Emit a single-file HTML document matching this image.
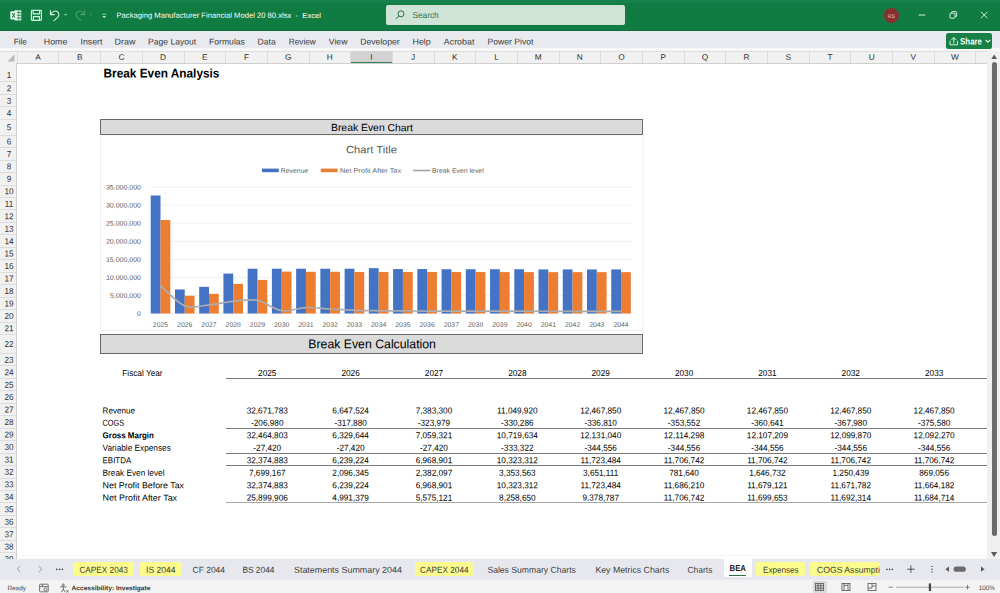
<!DOCTYPE html>
<html lang="en"><head><meta charset="utf-8"><title>Packaging Manufacturer Financial Model 20 80.xlsx - Excel</title>
<style>
html,body{margin:0;padding:0;}
body{width:1000px;height:593px;overflow:hidden;position:relative;background:#fff;font-family:"Liberation Sans",sans-serif;}
.r{position:absolute;display:block;}
.t{position:absolute;left:0;top:0;white-space:pre;transform-origin:0 0;display:block;}
</style></head><body>
<div class="r" style="left:0.00px;top:0.00px;width:1000.00px;height:31.00px;background:#107c41;"></div>
<div class="r" style="left:0.00px;top:0.00px;width:1000.00px;height:2.60px;background:#16814a;"></div>
<div class="r" style="left:0.00px;top:29.80px;width:1000.00px;height:1.20px;background:#0f6e3a;"></div>
<div class="r" style="left:385.80px;top:5.40px;width:239.20px;height:20.00px;background:#cfe3d7;border-radius:2px;"></div>
<div class="r" style="left:0.00px;top:31.00px;width:1000.00px;height:20.00px;background:#e8eaef;"></div>
<div class="r" style="left:0.00px;top:51.00px;width:1000.00px;height:508.40px;background:#fff;"></div>
<div class="r" style="left:0.00px;top:47.80px;width:1000.00px;height:3.00px;background:#f7f7f7;"></div>
<div class="r" style="left:0.00px;top:50.60px;width:987.50px;height:12.80px;background:#f1f1f1;"></div>
<div class="r" style="left:0.00px;top:50.60px;width:987.50px;height:1.30px;background:#dfdfdf;"></div>
<div class="r" style="left:0.00px;top:62.60px;width:987.50px;height:0.80px;background:#cfcfcf;"></div>
<div class="r" style="left:350.64px;top:50.80px;width:41.68px;height:12.60px;background:#d2d2d2;"></div>
<div class="r" style="left:350.64px;top:61.60px;width:41.68px;height:1.80px;background:#2f7d53;"></div>
<span class="t" style="font-size:7.9px;line-height:9.48px;color:#2e2e2e;transform:translate(35.27px,52.76px) scaleX(1.0500) rotate(0.04deg);">A</span>
<span class="t" style="font-size:7.9px;line-height:9.48px;color:#2e2e2e;transform:translate(76.95px,52.76px) scaleX(1.0500) rotate(0.04deg);">B</span>
<span class="t" style="font-size:7.9px;line-height:9.48px;color:#2e2e2e;transform:translate(118.40px,52.76px) scaleX(1.0500) rotate(0.04deg);">C</span>
<span class="t" style="font-size:7.9px;line-height:9.48px;color:#2e2e2e;transform:translate(160.08px,52.76px) scaleX(1.0500) rotate(0.04deg);">D</span>
<span class="t" style="font-size:7.9px;line-height:9.48px;color:#2e2e2e;transform:translate(201.99px,52.76px) scaleX(1.0500) rotate(0.04deg);">E</span>
<span class="t" style="font-size:7.9px;line-height:9.48px;color:#2e2e2e;transform:translate(243.91px,52.76px) scaleX(1.0500) rotate(0.04deg);">F</span>
<span class="t" style="font-size:7.9px;line-height:9.48px;color:#2e2e2e;transform:translate(284.89px,52.76px) scaleX(1.0500) rotate(0.04deg);">G</span>
<span class="t" style="font-size:7.9px;line-height:9.48px;color:#2e2e2e;transform:translate(326.80px,52.76px) scaleX(1.0500) rotate(0.04deg);">H</span>
<span class="t" style="font-size:7.9px;line-height:9.48px;color:#2e2e2e;transform:translate(370.33px,52.76px) scaleX(1.0500) rotate(0.04deg);">I</span>
<span class="t" style="font-size:7.9px;line-height:9.48px;color:#2e2e2e;transform:translate(411.09px,52.76px) scaleX(1.0500) rotate(0.04deg);">J</span>
<span class="t" style="font-size:7.9px;line-height:9.48px;color:#2e2e2e;transform:translate(452.07px,52.76px) scaleX(1.0500) rotate(0.04deg);">K</span>
<span class="t" style="font-size:7.9px;line-height:9.48px;color:#2e2e2e;transform:translate(494.21px,52.76px) scaleX(1.0500) rotate(0.04deg);">L</span>
<span class="t" style="font-size:7.9px;line-height:9.48px;color:#2e2e2e;transform:translate(534.74px,52.76px) scaleX(1.0500) rotate(0.04deg);">M</span>
<span class="t" style="font-size:7.9px;line-height:9.48px;color:#2e2e2e;transform:translate(576.88px,52.76px) scaleX(1.0500) rotate(0.04deg);">N</span>
<span class="t" style="font-size:7.9px;line-height:9.48px;color:#2e2e2e;transform:translate(618.33px,52.76px) scaleX(1.0500) rotate(0.04deg);">O</span>
<span class="t" style="font-size:7.9px;line-height:9.48px;color:#2e2e2e;transform:translate(660.47px,52.76px) scaleX(1.0500) rotate(0.04deg);">P</span>
<span class="t" style="font-size:7.9px;line-height:9.48px;color:#2e2e2e;transform:translate(701.69px,52.76px) scaleX(1.0500) rotate(0.04deg);">Q</span>
<span class="t" style="font-size:7.9px;line-height:9.48px;color:#2e2e2e;transform:translate(743.60px,52.76px) scaleX(1.0500) rotate(0.04deg);">R</span>
<span class="t" style="font-size:7.9px;line-height:9.48px;color:#2e2e2e;transform:translate(785.51px,52.76px) scaleX(1.0500) rotate(0.04deg);">S</span>
<span class="t" style="font-size:7.9px;line-height:9.48px;color:#2e2e2e;transform:translate(827.43px,52.76px) scaleX(1.0500) rotate(0.04deg);">T</span>
<span class="t" style="font-size:7.9px;line-height:9.48px;color:#2e2e2e;transform:translate(868.64px,52.76px) scaleX(1.0500) rotate(0.04deg);">U</span>
<span class="t" style="font-size:7.9px;line-height:9.48px;color:#2e2e2e;transform:translate(910.55px,52.76px) scaleX(1.0500) rotate(0.04deg);">V</span>
<span class="t" style="font-size:7.9px;line-height:9.48px;color:#2e2e2e;transform:translate(951.09px,52.76px) scaleX(1.0500) rotate(0.04deg);">W</span>
<div class="r" style="left:16.80px;top:52.00px;width:0.80px;height:11.40px;background:#dcdcdc;"></div>
<div class="r" style="left:58.48px;top:52.00px;width:0.80px;height:11.40px;background:#dcdcdc;"></div>
<div class="r" style="left:100.16px;top:52.00px;width:0.80px;height:11.40px;background:#dcdcdc;"></div>
<div class="r" style="left:141.84px;top:52.00px;width:0.80px;height:11.40px;background:#dcdcdc;"></div>
<div class="r" style="left:183.52px;top:52.00px;width:0.80px;height:11.40px;background:#dcdcdc;"></div>
<div class="r" style="left:225.20px;top:52.00px;width:0.80px;height:11.40px;background:#dcdcdc;"></div>
<div class="r" style="left:266.88px;top:52.00px;width:0.80px;height:11.40px;background:#dcdcdc;"></div>
<div class="r" style="left:308.56px;top:52.00px;width:0.80px;height:11.40px;background:#dcdcdc;"></div>
<div class="r" style="left:350.24px;top:52.00px;width:0.80px;height:11.40px;background:#dcdcdc;"></div>
<div class="r" style="left:391.92px;top:52.00px;width:0.80px;height:11.40px;background:#dcdcdc;"></div>
<div class="r" style="left:433.60px;top:52.00px;width:0.80px;height:11.40px;background:#dcdcdc;"></div>
<div class="r" style="left:475.28px;top:52.00px;width:0.80px;height:11.40px;background:#dcdcdc;"></div>
<div class="r" style="left:516.96px;top:52.00px;width:0.80px;height:11.40px;background:#dcdcdc;"></div>
<div class="r" style="left:558.64px;top:52.00px;width:0.80px;height:11.40px;background:#dcdcdc;"></div>
<div class="r" style="left:600.32px;top:52.00px;width:0.80px;height:11.40px;background:#dcdcdc;"></div>
<div class="r" style="left:642.00px;top:52.00px;width:0.80px;height:11.40px;background:#dcdcdc;"></div>
<div class="r" style="left:683.68px;top:52.00px;width:0.80px;height:11.40px;background:#dcdcdc;"></div>
<div class="r" style="left:725.36px;top:52.00px;width:0.80px;height:11.40px;background:#dcdcdc;"></div>
<div class="r" style="left:767.04px;top:52.00px;width:0.80px;height:11.40px;background:#dcdcdc;"></div>
<div class="r" style="left:808.72px;top:52.00px;width:0.80px;height:11.40px;background:#dcdcdc;"></div>
<div class="r" style="left:850.40px;top:52.00px;width:0.80px;height:11.40px;background:#dcdcdc;"></div>
<div class="r" style="left:892.08px;top:52.00px;width:0.80px;height:11.40px;background:#dcdcdc;"></div>
<div class="r" style="left:933.76px;top:52.00px;width:0.80px;height:11.40px;background:#dcdcdc;"></div>
<div class="r" style="left:975.44px;top:52.00px;width:0.80px;height:11.40px;background:#dcdcdc;"></div>
<div class="r" style="left:1017.12px;top:52.00px;width:0.80px;height:11.40px;background:#dcdcdc;"></div>
<svg class="r" style="left:0;top:51.0px" width="17.2" height="12.399999999999999" viewBox="0 0 17.2 12.399999999999999"><polygon points="14.5,3.5 14.5,10.5 7.5,10.5" fill="#b8b8b8"/></svg>
<div class="r" style="left:0.00px;top:63.40px;width:17.20px;height:496.00px;background:#f1f1f1;"></div>
<div class="r" style="left:16.40px;top:63.40px;width:0.80px;height:496.00px;background:#cfcfcf;"></div>
<div class="r" style="left:0.00px;top:81.40px;width:17.20px;height:0.80px;background:#dcdcdc;"></div>
<span class="t" style="font-size:8.6px;line-height:10.32px;color:#333;transform:translate(6.83px,69.94px) scaleX(0.9500) rotate(0.04deg);">1</span>
<div class="r" style="left:0.00px;top:93.86px;width:17.20px;height:0.80px;background:#dcdcdc;"></div>
<span class="t" style="font-size:8.6px;line-height:10.32px;color:#333;transform:translate(6.83px,83.17px) scaleX(0.9500) rotate(0.04deg);">2</span>
<div class="r" style="left:0.00px;top:106.32px;width:17.20px;height:0.80px;background:#dcdcdc;"></div>
<span class="t" style="font-size:8.6px;line-height:10.32px;color:#333;transform:translate(6.83px,95.63px) scaleX(0.9500) rotate(0.04deg);">3</span>
<div class="r" style="left:0.00px;top:118.78px;width:17.20px;height:0.80px;background:#dcdcdc;"></div>
<span class="t" style="font-size:8.6px;line-height:10.32px;color:#333;transform:translate(6.83px,108.09px) scaleX(0.9500) rotate(0.04deg);">4</span>
<div class="r" style="left:0.00px;top:134.68px;width:17.20px;height:0.80px;background:#dcdcdc;"></div>
<span class="t" style="font-size:8.6px;line-height:10.32px;color:#333;transform:translate(6.83px,122.27px) scaleX(0.9500) rotate(0.04deg);">5</span>
<div class="r" style="left:0.00px;top:147.14px;width:17.20px;height:0.80px;background:#dcdcdc;"></div>
<span class="t" style="font-size:8.6px;line-height:10.32px;color:#333;transform:translate(6.83px,136.45px) scaleX(0.9500) rotate(0.04deg);">6</span>
<div class="r" style="left:0.00px;top:159.60px;width:17.20px;height:0.80px;background:#dcdcdc;"></div>
<span class="t" style="font-size:8.6px;line-height:10.32px;color:#333;transform:translate(6.83px,148.91px) scaleX(0.9500) rotate(0.04deg);">7</span>
<div class="r" style="left:0.00px;top:172.06px;width:17.20px;height:0.80px;background:#dcdcdc;"></div>
<span class="t" style="font-size:8.6px;line-height:10.32px;color:#333;transform:translate(6.83px,161.37px) scaleX(0.9500) rotate(0.04deg);">8</span>
<div class="r" style="left:0.00px;top:184.52px;width:17.20px;height:0.80px;background:#dcdcdc;"></div>
<span class="t" style="font-size:8.6px;line-height:10.32px;color:#333;transform:translate(6.83px,173.83px) scaleX(0.9500) rotate(0.04deg);">9</span>
<div class="r" style="left:0.00px;top:196.98px;width:17.20px;height:0.80px;background:#dcdcdc;"></div>
<span class="t" style="font-size:8.6px;line-height:10.32px;color:#333;transform:translate(4.56px,186.29px) scaleX(0.9500) rotate(0.04deg);">10</span>
<div class="r" style="left:0.00px;top:209.44px;width:17.20px;height:0.80px;background:#dcdcdc;"></div>
<span class="t" style="font-size:8.6px;line-height:10.32px;color:#333;transform:translate(4.86px,198.75px) scaleX(0.9500) rotate(0.04deg);">11</span>
<div class="r" style="left:0.00px;top:221.90px;width:17.20px;height:0.80px;background:#dcdcdc;"></div>
<span class="t" style="font-size:8.6px;line-height:10.32px;color:#333;transform:translate(4.56px,211.21px) scaleX(0.9500) rotate(0.04deg);">12</span>
<div class="r" style="left:0.00px;top:234.36px;width:17.20px;height:0.80px;background:#dcdcdc;"></div>
<span class="t" style="font-size:8.6px;line-height:10.32px;color:#333;transform:translate(4.56px,223.67px) scaleX(0.9500) rotate(0.04deg);">13</span>
<div class="r" style="left:0.00px;top:246.82px;width:17.20px;height:0.80px;background:#dcdcdc;"></div>
<span class="t" style="font-size:8.6px;line-height:10.32px;color:#333;transform:translate(4.56px,236.13px) scaleX(0.9500) rotate(0.04deg);">14</span>
<div class="r" style="left:0.00px;top:259.28px;width:17.20px;height:0.80px;background:#dcdcdc;"></div>
<span class="t" style="font-size:8.6px;line-height:10.32px;color:#333;transform:translate(4.56px,248.59px) scaleX(0.9500) rotate(0.04deg);">15</span>
<div class="r" style="left:0.00px;top:271.74px;width:17.20px;height:0.80px;background:#dcdcdc;"></div>
<span class="t" style="font-size:8.6px;line-height:10.32px;color:#333;transform:translate(4.56px,261.05px) scaleX(0.9500) rotate(0.04deg);">16</span>
<div class="r" style="left:0.00px;top:284.20px;width:17.20px;height:0.80px;background:#dcdcdc;"></div>
<span class="t" style="font-size:8.6px;line-height:10.32px;color:#333;transform:translate(4.56px,273.51px) scaleX(0.9500) rotate(0.04deg);">17</span>
<div class="r" style="left:0.00px;top:296.66px;width:17.20px;height:0.80px;background:#dcdcdc;"></div>
<span class="t" style="font-size:8.6px;line-height:10.32px;color:#333;transform:translate(4.56px,285.97px) scaleX(0.9500) rotate(0.04deg);">18</span>
<div class="r" style="left:0.00px;top:309.12px;width:17.20px;height:0.80px;background:#dcdcdc;"></div>
<span class="t" style="font-size:8.6px;line-height:10.32px;color:#333;transform:translate(4.56px,298.43px) scaleX(0.9500) rotate(0.04deg);">19</span>
<div class="r" style="left:0.00px;top:321.58px;width:17.20px;height:0.80px;background:#dcdcdc;"></div>
<span class="t" style="font-size:8.6px;line-height:10.32px;color:#333;transform:translate(4.56px,310.89px) scaleX(0.9500) rotate(0.04deg);">20</span>
<div class="r" style="left:0.00px;top:334.04px;width:17.20px;height:0.80px;background:#dcdcdc;"></div>
<span class="t" style="font-size:8.6px;line-height:10.32px;color:#333;transform:translate(4.56px,323.35px) scaleX(0.9500) rotate(0.04deg);">21</span>
<div class="r" style="left:0.00px;top:352.94px;width:17.20px;height:0.80px;background:#dcdcdc;"></div>
<span class="t" style="font-size:8.6px;line-height:10.32px;color:#333;transform:translate(4.56px,339.03px) scaleX(0.9500) rotate(0.04deg);">22</span>
<div class="r" style="left:0.00px;top:365.40px;width:17.20px;height:0.80px;background:#dcdcdc;"></div>
<span class="t" style="font-size:8.6px;line-height:10.32px;color:#333;transform:translate(4.56px,354.71px) scaleX(0.9500) rotate(0.04deg);">23</span>
<div class="r" style="left:0.00px;top:377.86px;width:17.20px;height:0.80px;background:#dcdcdc;"></div>
<span class="t" style="font-size:8.6px;line-height:10.32px;color:#333;transform:translate(4.56px,367.17px) scaleX(0.9500) rotate(0.04deg);">24</span>
<div class="r" style="left:0.00px;top:390.32px;width:17.20px;height:0.80px;background:#dcdcdc;"></div>
<span class="t" style="font-size:8.6px;line-height:10.32px;color:#333;transform:translate(4.56px,379.63px) scaleX(0.9500) rotate(0.04deg);">25</span>
<div class="r" style="left:0.00px;top:402.78px;width:17.20px;height:0.80px;background:#dcdcdc;"></div>
<span class="t" style="font-size:8.6px;line-height:10.32px;color:#333;transform:translate(4.56px,392.09px) scaleX(0.9500) rotate(0.04deg);">26</span>
<div class="r" style="left:0.00px;top:415.24px;width:17.20px;height:0.80px;background:#dcdcdc;"></div>
<span class="t" style="font-size:8.6px;line-height:10.32px;color:#333;transform:translate(4.56px,404.55px) scaleX(0.9500) rotate(0.04deg);">27</span>
<div class="r" style="left:0.00px;top:427.70px;width:17.20px;height:0.80px;background:#dcdcdc;"></div>
<span class="t" style="font-size:8.6px;line-height:10.32px;color:#333;transform:translate(4.56px,417.01px) scaleX(0.9500) rotate(0.04deg);">28</span>
<div class="r" style="left:0.00px;top:440.16px;width:17.20px;height:0.80px;background:#dcdcdc;"></div>
<span class="t" style="font-size:8.6px;line-height:10.32px;color:#333;transform:translate(4.56px,429.47px) scaleX(0.9500) rotate(0.04deg);">29</span>
<div class="r" style="left:0.00px;top:452.62px;width:17.20px;height:0.80px;background:#dcdcdc;"></div>
<span class="t" style="font-size:8.6px;line-height:10.32px;color:#333;transform:translate(4.56px,441.93px) scaleX(0.9500) rotate(0.04deg);">30</span>
<div class="r" style="left:0.00px;top:465.08px;width:17.20px;height:0.80px;background:#dcdcdc;"></div>
<span class="t" style="font-size:8.6px;line-height:10.32px;color:#333;transform:translate(4.56px,454.39px) scaleX(0.9500) rotate(0.04deg);">31</span>
<div class="r" style="left:0.00px;top:477.54px;width:17.20px;height:0.80px;background:#dcdcdc;"></div>
<span class="t" style="font-size:8.6px;line-height:10.32px;color:#333;transform:translate(4.56px,466.85px) scaleX(0.9500) rotate(0.04deg);">32</span>
<div class="r" style="left:0.00px;top:490.00px;width:17.20px;height:0.80px;background:#dcdcdc;"></div>
<span class="t" style="font-size:8.6px;line-height:10.32px;color:#333;transform:translate(4.56px,479.31px) scaleX(0.9500) rotate(0.04deg);">33</span>
<div class="r" style="left:0.00px;top:502.46px;width:17.20px;height:0.80px;background:#dcdcdc;"></div>
<span class="t" style="font-size:8.6px;line-height:10.32px;color:#333;transform:translate(4.56px,491.77px) scaleX(0.9500) rotate(0.04deg);">34</span>
<div class="r" style="left:0.00px;top:514.92px;width:17.20px;height:0.80px;background:#dcdcdc;"></div>
<span class="t" style="font-size:8.6px;line-height:10.32px;color:#333;transform:translate(4.56px,504.23px) scaleX(0.9500) rotate(0.04deg);">35</span>
<div class="r" style="left:0.00px;top:527.38px;width:17.20px;height:0.80px;background:#dcdcdc;"></div>
<span class="t" style="font-size:8.6px;line-height:10.32px;color:#333;transform:translate(4.56px,516.69px) scaleX(0.9500) rotate(0.04deg);">36</span>
<div class="r" style="left:0.00px;top:539.84px;width:17.20px;height:0.80px;background:#dcdcdc;"></div>
<span class="t" style="font-size:8.6px;line-height:10.32px;color:#333;transform:translate(4.56px,529.15px) scaleX(0.9500) rotate(0.04deg);">37</span>
<div class="r" style="left:0.00px;top:552.30px;width:17.20px;height:0.80px;background:#dcdcdc;"></div>
<span class="t" style="font-size:8.6px;line-height:10.32px;color:#333;transform:translate(4.56px,541.61px) scaleX(0.9500) rotate(0.04deg);">38</span>
<div class="r" style="left:0.00px;top:564.76px;width:17.20px;height:0.80px;background:#dcdcdc;"></div>
<span class="t" style="font-size:8.6px;line-height:10.32px;color:#333;transform:translate(4.56px,554.07px) scaleX(0.9500) rotate(0.04deg);">39</span>
<span class="t" style="font-size:12.6px;line-height:15.12px;color:#000;font-weight:bold;transform:translate(103.50px,66.44px) scaleX(0.9392) rotate(0.04deg);">Break Even Analysis</span>
<div class="r" style="left:100.00px;top:118.88px;width:543.40px;height:16.40px;background:#dbdbdb;box-sizing:border-box;border:1px solid #6a6a6a;"></div>
<span class="t" style="font-size:10.4px;line-height:12.48px;color:#000;transform:translate(331.00px,122.09px) scaleX(0.9990) rotate(0.04deg);">Break Even Chart</span>
<div class="r" style="left:100.00px;top:334.14px;width:543.40px;height:19.40px;background:#dbdbdb;box-sizing:border-box;border:1px solid #6a6a6a;"></div>
<span class="t" style="font-size:12.6px;line-height:15.12px;color:#000;transform:translate(308.30px,337.13px) scaleX(0.9750) rotate(0.04deg);">Break Even Calculation</span>
<svg class="r" style="left:100.0px;top:134.8px" width="543.6" height="199.2" viewBox="100.0 134.8 543.6 199.2" font-family="Liberation Sans, sans-serif"><rect x="100.4" y="134.8" width="542.8000000000001" height="195.2" fill="#fff" stroke="#ececec" stroke-width="0.8"/><line x1="151" x2="632.5" y1="313.30" y2="313.30" stroke="#ebebeb" stroke-width="0.8"/><line x1="151" x2="632.5" y1="295.24" y2="295.24" stroke="#ebebeb" stroke-width="0.8"/><line x1="151" x2="632.5" y1="277.19" y2="277.19" stroke="#ebebeb" stroke-width="0.8"/><line x1="151" x2="632.5" y1="259.13" y2="259.13" stroke="#ebebeb" stroke-width="0.8"/><line x1="151" x2="632.5" y1="241.07" y2="241.07" stroke="#ebebeb" stroke-width="0.8"/><line x1="151" x2="632.5" y1="223.01" y2="223.01" stroke="#ebebeb" stroke-width="0.8"/><line x1="151" x2="632.5" y1="204.96" y2="204.96" stroke="#ebebeb" stroke-width="0.8"/><line x1="151" x2="632.5" y1="186.90" y2="186.90" stroke="#ebebeb" stroke-width="0.8"/><rect x="150.70" y="195.31" width="9.8" height="117.99" fill="#4472c4"/><rect x="160.50" y="219.76" width="9.8" height="93.54" fill="#ed7d31"/><rect x="174.94" y="289.28" width="9.8" height="24.02" fill="#4472c4"/><rect x="184.74" y="295.60" width="9.8" height="17.70" fill="#ed7d31"/><rect x="199.18" y="286.65" width="9.8" height="26.65" fill="#4472c4"/><rect x="208.98" y="293.62" width="9.8" height="19.68" fill="#ed7d31"/><rect x="223.42" y="273.39" width="9.8" height="39.91" fill="#4472c4"/><rect x="233.22" y="283.69" width="9.8" height="29.61" fill="#ed7d31"/><rect x="247.66" y="268.52" width="9.8" height="44.78" fill="#4472c4"/><rect x="257.46" y="279.71" width="9.8" height="33.59" fill="#ed7d31"/><rect x="271.90" y="268.52" width="9.8" height="44.78" fill="#4472c4"/><rect x="281.70" y="271.41" width="9.8" height="41.89" fill="#ed7d31"/><rect x="296.14" y="268.52" width="9.8" height="44.78" fill="#4472c4"/><rect x="305.94" y="271.59" width="9.8" height="41.71" fill="#ed7d31"/><rect x="320.38" y="268.52" width="9.8" height="44.78" fill="#4472c4"/><rect x="330.18" y="271.59" width="9.8" height="41.71" fill="#ed7d31"/><rect x="344.62" y="268.52" width="9.8" height="44.78" fill="#4472c4"/><rect x="354.42" y="271.77" width="9.8" height="41.53" fill="#ed7d31"/><rect x="368.86" y="267.98" width="9.8" height="45.32" fill="#4472c4"/><rect x="378.66" y="271.77" width="9.8" height="41.53" fill="#ed7d31"/><rect x="393.10" y="268.88" width="9.8" height="44.42" fill="#4472c4"/><rect x="402.90" y="271.77" width="9.8" height="41.53" fill="#ed7d31"/><rect x="417.34" y="268.88" width="9.8" height="44.42" fill="#4472c4"/><rect x="427.14" y="271.77" width="9.8" height="41.53" fill="#ed7d31"/><rect x="441.58" y="269.06" width="9.8" height="44.24" fill="#4472c4"/><rect x="451.38" y="271.84" width="9.8" height="41.46" fill="#ed7d31"/><rect x="465.82" y="269.06" width="9.8" height="44.24" fill="#4472c4"/><rect x="475.62" y="271.84" width="9.8" height="41.46" fill="#ed7d31"/><rect x="490.06" y="269.06" width="9.8" height="44.24" fill="#4472c4"/><rect x="499.86" y="271.91" width="9.8" height="41.39" fill="#ed7d31"/><rect x="514.30" y="269.06" width="9.8" height="44.24" fill="#4472c4"/><rect x="524.10" y="271.91" width="9.8" height="41.39" fill="#ed7d31"/><rect x="538.54" y="269.24" width="9.8" height="44.06" fill="#4472c4"/><rect x="548.34" y="271.95" width="9.8" height="41.35" fill="#ed7d31"/><rect x="562.78" y="269.24" width="9.8" height="44.06" fill="#4472c4"/><rect x="572.58" y="271.95" width="9.8" height="41.35" fill="#ed7d31"/><rect x="587.02" y="269.24" width="9.8" height="44.06" fill="#4472c4"/><rect x="596.82" y="271.95" width="9.8" height="41.35" fill="#ed7d31"/><rect x="611.26" y="269.24" width="9.8" height="44.06" fill="#4472c4"/><rect x="621.06" y="271.95" width="9.8" height="41.35" fill="#ed7d31"/><path d="M160.50,285.49 C164.54,288.86 176.66,302.51 184.74,305.72 C192.82,308.92 200.90,305.46 208.98,304.70 C217.06,303.95 225.14,301.97 233.22,301.20 C241.30,300.44 249.38,298.57 257.46,300.12 C265.54,301.67 273.62,309.28 281.70,310.48 C289.78,311.69 297.86,307.62 305.94,307.34 C314.02,307.06 322.10,308.32 330.18,308.79 C338.26,309.26 346.34,309.86 354.42,310.16 C362.50,310.46 370.58,310.49 378.66,310.59 C386.74,310.69 394.82,310.73 402.90,310.77 C410.98,310.81 419.06,310.82 427.14,310.84 C435.22,310.87 443.30,310.90 451.38,310.92 C459.46,310.93 467.54,310.94 475.62,310.95 C483.70,310.96 491.78,310.98 499.86,310.99 C507.94,311.00 516.02,311.01 524.10,311.02 C532.18,311.04 540.26,311.05 548.34,311.06 C556.42,311.07 564.50,311.08 572.58,311.10 C580.66,311.11 588.74,311.13 596.82,311.13 C604.90,311.14 617.02,311.13 621.06,311.13" fill="none" stroke="#acacac" stroke-width="1.7" stroke-linecap="round"/><rect x="262" y="168.4" width="16.8" height="3.6" fill="#4472c4"/><rect x="320.8" y="168.4" width="16.8" height="3.6" fill="#ed7d31"/><line x1="413" x2="430.5" y1="170.3" y2="170.3" stroke="#a5a5a5" stroke-width="1.6"/></svg>
<span class="t" style="font-size:10.6px;line-height:12.72px;color:#595959;transform:translate(346.00px,143.34px) scaleX(1.0557) rotate(0.04deg);">Chart Title</span>
<span class="t" style="font-size:6.4px;line-height:7.68px;color:#595959;transform:translate(280.80px,166.76px) scaleX(1.0773) rotate(0.04deg);">Revenue</span>
<span class="t" style="font-size:6.4px;line-height:7.68px;color:#595959;transform:translate(340.00px,166.76px) scaleX(1.1495) rotate(0.04deg);">Net Profit After Tax</span>
<span class="t" style="font-size:6.4px;line-height:7.68px;color:#595959;transform:translate(432.00px,166.76px) scaleX(1.0786) rotate(0.04deg);">Break Even level</span>
<span class="t" style="font-size:6.6px;line-height:7.92px;color:#595959;transform:translate(105.99px,183.44px) scaleX(1.0600) rotate(0.04deg);">35,000,000</span>
<span class="t" style="font-size:6.6px;line-height:7.92px;color:#595959;transform:translate(105.99px,201.50px) scaleX(1.0600) rotate(0.04deg);">30,000,000</span>
<span class="t" style="font-size:6.6px;line-height:7.92px;color:#595959;transform:translate(105.99px,219.55px) scaleX(1.0600) rotate(0.04deg);">25,000,000</span>
<span class="t" style="font-size:6.6px;line-height:7.92px;color:#595959;transform:translate(105.99px,237.61px) scaleX(1.0600) rotate(0.04deg);">20,000,000</span>
<span class="t" style="font-size:6.6px;line-height:7.92px;color:#595959;transform:translate(105.99px,255.67px) scaleX(1.0600) rotate(0.04deg);">15,000,000</span>
<span class="t" style="font-size:6.6px;line-height:7.92px;color:#595959;transform:translate(105.99px,273.73px) scaleX(1.0600) rotate(0.04deg);">10,000,000</span>
<span class="t" style="font-size:6.6px;line-height:7.92px;color:#595959;transform:translate(109.88px,291.78px) scaleX(1.0600) rotate(0.04deg);">5,000,000</span>
<span class="t" style="font-size:6.6px;line-height:7.92px;color:#595959;transform:translate(137.11px,309.84px) scaleX(1.0600) rotate(0.04deg);">0</span>
<span class="t" style="font-size:6.6px;line-height:7.92px;color:#595959;transform:translate(152.86px,320.74px) scaleX(1.0400) rotate(0.04deg);">2025</span>
<span class="t" style="font-size:6.6px;line-height:7.92px;color:#595959;transform:translate(177.10px,320.74px) scaleX(1.0400) rotate(0.04deg);">2026</span>
<span class="t" style="font-size:6.6px;line-height:7.92px;color:#595959;transform:translate(201.34px,320.74px) scaleX(1.0400) rotate(0.04deg);">2027</span>
<span class="t" style="font-size:6.6px;line-height:7.92px;color:#595959;transform:translate(225.58px,320.74px) scaleX(1.0400) rotate(0.04deg);">2028</span>
<span class="t" style="font-size:6.6px;line-height:7.92px;color:#595959;transform:translate(249.82px,320.74px) scaleX(1.0400) rotate(0.04deg);">2029</span>
<span class="t" style="font-size:6.6px;line-height:7.92px;color:#595959;transform:translate(274.06px,320.74px) scaleX(1.0400) rotate(0.04deg);">2030</span>
<span class="t" style="font-size:6.6px;line-height:7.92px;color:#595959;transform:translate(298.30px,320.74px) scaleX(1.0400) rotate(0.04deg);">2031</span>
<span class="t" style="font-size:6.6px;line-height:7.92px;color:#595959;transform:translate(322.54px,320.74px) scaleX(1.0400) rotate(0.04deg);">2032</span>
<span class="t" style="font-size:6.6px;line-height:7.92px;color:#595959;transform:translate(346.78px,320.74px) scaleX(1.0400) rotate(0.04deg);">2033</span>
<span class="t" style="font-size:6.6px;line-height:7.92px;color:#595959;transform:translate(371.02px,320.74px) scaleX(1.0400) rotate(0.04deg);">2034</span>
<span class="t" style="font-size:6.6px;line-height:7.92px;color:#595959;transform:translate(395.26px,320.74px) scaleX(1.0400) rotate(0.04deg);">2035</span>
<span class="t" style="font-size:6.6px;line-height:7.92px;color:#595959;transform:translate(419.50px,320.74px) scaleX(1.0400) rotate(0.04deg);">2036</span>
<span class="t" style="font-size:6.6px;line-height:7.92px;color:#595959;transform:translate(443.74px,320.74px) scaleX(1.0400) rotate(0.04deg);">2037</span>
<span class="t" style="font-size:6.6px;line-height:7.92px;color:#595959;transform:translate(467.98px,320.74px) scaleX(1.0400) rotate(0.04deg);">2038</span>
<span class="t" style="font-size:6.6px;line-height:7.92px;color:#595959;transform:translate(492.22px,320.74px) scaleX(1.0400) rotate(0.04deg);">2039</span>
<span class="t" style="font-size:6.6px;line-height:7.92px;color:#595959;transform:translate(516.46px,320.74px) scaleX(1.0400) rotate(0.04deg);">2040</span>
<span class="t" style="font-size:6.6px;line-height:7.92px;color:#595959;transform:translate(540.70px,320.74px) scaleX(1.0400) rotate(0.04deg);">2041</span>
<span class="t" style="font-size:6.6px;line-height:7.92px;color:#595959;transform:translate(564.94px,320.74px) scaleX(1.0400) rotate(0.04deg);">2042</span>
<span class="t" style="font-size:6.6px;line-height:7.92px;color:#595959;transform:translate(589.18px,320.74px) scaleX(1.0400) rotate(0.04deg);">2043</span>
<span class="t" style="font-size:6.6px;line-height:7.92px;color:#595959;transform:translate(613.42px,320.74px) scaleX(1.0400) rotate(0.04deg);">2044</span>
<span class="t" style="font-size:8.7px;line-height:10.44px;color:#000;transform:translate(122.30px,368.01px) scaleX(0.9469) rotate(0.04deg);">Fiscal Year</span>
<span class="t" style="font-size:8.7px;line-height:10.44px;color:#000;transform:translate(258.09px,368.01px) scaleX(0.9500) rotate(0.04deg);">2025</span>
<span class="t" style="font-size:8.7px;line-height:10.44px;color:#000;transform:translate(341.45px,368.01px) scaleX(0.9500) rotate(0.04deg);">2026</span>
<span class="t" style="font-size:8.7px;line-height:10.44px;color:#000;transform:translate(424.81px,368.01px) scaleX(0.9500) rotate(0.04deg);">2027</span>
<span class="t" style="font-size:8.7px;line-height:10.44px;color:#000;transform:translate(508.17px,368.01px) scaleX(0.9500) rotate(0.04deg);">2028</span>
<span class="t" style="font-size:8.7px;line-height:10.44px;color:#000;transform:translate(591.53px,368.01px) scaleX(0.9500) rotate(0.04deg);">2029</span>
<span class="t" style="font-size:8.7px;line-height:10.44px;color:#000;transform:translate(674.89px,368.01px) scaleX(0.9500) rotate(0.04deg);">2030</span>
<span class="t" style="font-size:8.7px;line-height:10.44px;color:#000;transform:translate(758.25px,368.01px) scaleX(0.9500) rotate(0.04deg);">2031</span>
<span class="t" style="font-size:8.7px;line-height:10.44px;color:#000;transform:translate(841.61px,368.01px) scaleX(0.9500) rotate(0.04deg);">2032</span>
<span class="t" style="font-size:8.7px;line-height:10.44px;color:#000;transform:translate(924.97px,368.01px) scaleX(0.9500) rotate(0.04deg);">2033</span>
<span class="t" style="font-size:8.7px;line-height:10.44px;color:#000;transform:translate(102.60px,405.39px) scaleX(0.9303) rotate(0.04deg);">Revenue</span>
<span class="t" style="font-size:8.7px;line-height:10.44px;color:#000;transform:translate(246.71px,405.39px) scaleX(0.9450) rotate(0.04deg);">32,671,783</span>
<span class="t" style="font-size:8.7px;line-height:10.44px;color:#000;transform:translate(332.35px,405.39px) scaleX(0.9450) rotate(0.04deg);">6,647,524</span>
<span class="t" style="font-size:8.7px;line-height:10.44px;color:#000;transform:translate(415.71px,405.39px) scaleX(0.9450) rotate(0.04deg);">7,383,300</span>
<span class="t" style="font-size:8.7px;line-height:10.44px;color:#000;transform:translate(497.09px,405.39px) scaleX(0.9450) rotate(0.04deg);">11,049,920</span>
<span class="t" style="font-size:8.7px;line-height:10.44px;color:#000;transform:translate(580.15px,405.39px) scaleX(0.9450) rotate(0.04deg);">12,467,850</span>
<span class="t" style="font-size:8.7px;line-height:10.44px;color:#000;transform:translate(663.51px,405.39px) scaleX(0.9450) rotate(0.04deg);">12,467,850</span>
<span class="t" style="font-size:8.7px;line-height:10.44px;color:#000;transform:translate(746.87px,405.39px) scaleX(0.9450) rotate(0.04deg);">12,467,850</span>
<span class="t" style="font-size:8.7px;line-height:10.44px;color:#000;transform:translate(830.23px,405.39px) scaleX(0.9450) rotate(0.04deg);">12,467,850</span>
<span class="t" style="font-size:8.7px;line-height:10.44px;color:#000;transform:translate(913.59px,405.39px) scaleX(0.9450) rotate(0.04deg);">12,467,850</span>
<span class="t" style="font-size:8.7px;line-height:10.44px;color:#000;transform:translate(102.60px,417.85px) scaleX(0.8392) rotate(0.04deg);">COGS</span>
<span class="t" style="font-size:8.7px;line-height:10.44px;color:#000;transform:translate(251.05px,417.85px) scaleX(0.9450) rotate(0.04deg);">-206,980</span>
<span class="t" style="font-size:8.7px;line-height:10.44px;color:#000;transform:translate(334.41px,417.85px) scaleX(0.9450) rotate(0.04deg);">-317,880</span>
<span class="t" style="font-size:8.7px;line-height:10.44px;color:#000;transform:translate(417.77px,417.85px) scaleX(0.9450) rotate(0.04deg);">-323,979</span>
<span class="t" style="font-size:8.7px;line-height:10.44px;color:#000;transform:translate(501.13px,417.85px) scaleX(0.9450) rotate(0.04deg);">-330,286</span>
<span class="t" style="font-size:8.7px;line-height:10.44px;color:#000;transform:translate(584.49px,417.85px) scaleX(0.9450) rotate(0.04deg);">-336,810</span>
<span class="t" style="font-size:8.7px;line-height:10.44px;color:#000;transform:translate(667.85px,417.85px) scaleX(0.9450) rotate(0.04deg);">-353,552</span>
<span class="t" style="font-size:8.7px;line-height:10.44px;color:#000;transform:translate(751.21px,417.85px) scaleX(0.9450) rotate(0.04deg);">-360,641</span>
<span class="t" style="font-size:8.7px;line-height:10.44px;color:#000;transform:translate(834.57px,417.85px) scaleX(0.9450) rotate(0.04deg);">-367,980</span>
<span class="t" style="font-size:8.7px;line-height:10.44px;color:#000;transform:translate(917.93px,417.85px) scaleX(0.9450) rotate(0.04deg);">-375,580</span>
<span class="t" style="font-size:8.7px;line-height:10.44px;color:#000;font-weight:bold;transform:translate(102.60px,430.31px) scaleX(0.9166) rotate(0.04deg);">Gross Margin</span>
<span class="t" style="font-size:8.7px;line-height:10.44px;color:#000;transform:translate(246.71px,430.31px) scaleX(0.9450) rotate(0.04deg);">32,464,803</span>
<span class="t" style="font-size:8.7px;line-height:10.44px;color:#000;transform:translate(332.35px,430.31px) scaleX(0.9450) rotate(0.04deg);">6,329,644</span>
<span class="t" style="font-size:8.7px;line-height:10.44px;color:#000;transform:translate(415.71px,430.31px) scaleX(0.9450) rotate(0.04deg);">7,059,321</span>
<span class="t" style="font-size:8.7px;line-height:10.44px;color:#000;transform:translate(496.79px,430.31px) scaleX(0.9450) rotate(0.04deg);">10,719,634</span>
<span class="t" style="font-size:8.7px;line-height:10.44px;color:#000;transform:translate(580.15px,430.31px) scaleX(0.9450) rotate(0.04deg);">12,131,040</span>
<span class="t" style="font-size:8.7px;line-height:10.44px;color:#000;transform:translate(663.81px,430.31px) scaleX(0.9450) rotate(0.04deg);">12,114,298</span>
<span class="t" style="font-size:8.7px;line-height:10.44px;color:#000;transform:translate(746.87px,430.31px) scaleX(0.9450) rotate(0.04deg);">12,107,209</span>
<span class="t" style="font-size:8.7px;line-height:10.44px;color:#000;transform:translate(830.23px,430.31px) scaleX(0.9450) rotate(0.04deg);">12,099,870</span>
<span class="t" style="font-size:8.7px;line-height:10.44px;color:#000;transform:translate(913.59px,430.31px) scaleX(0.9450) rotate(0.04deg);">12,092,270</span>
<span class="t" style="font-size:8.7px;line-height:10.44px;color:#000;transform:translate(102.60px,442.77px) scaleX(0.9499) rotate(0.04deg);">Variable Expenses</span>
<span class="t" style="font-size:8.7px;line-height:10.44px;color:#000;transform:translate(253.34px,442.77px) scaleX(0.9450) rotate(0.04deg);">-27,420</span>
<span class="t" style="font-size:8.7px;line-height:10.44px;color:#000;transform:translate(336.70px,442.77px) scaleX(0.9450) rotate(0.04deg);">-27,420</span>
<span class="t" style="font-size:8.7px;line-height:10.44px;color:#000;transform:translate(420.06px,442.77px) scaleX(0.9450) rotate(0.04deg);">-27,420</span>
<span class="t" style="font-size:8.7px;line-height:10.44px;color:#000;transform:translate(501.13px,442.77px) scaleX(0.9450) rotate(0.04deg);">-333,322</span>
<span class="t" style="font-size:8.7px;line-height:10.44px;color:#000;transform:translate(584.49px,442.77px) scaleX(0.9450) rotate(0.04deg);">-344,556</span>
<span class="t" style="font-size:8.7px;line-height:10.44px;color:#000;transform:translate(667.85px,442.77px) scaleX(0.9450) rotate(0.04deg);">-344,556</span>
<span class="t" style="font-size:8.7px;line-height:10.44px;color:#000;transform:translate(751.21px,442.77px) scaleX(0.9450) rotate(0.04deg);">-344,556</span>
<span class="t" style="font-size:8.7px;line-height:10.44px;color:#000;transform:translate(834.57px,442.77px) scaleX(0.9450) rotate(0.04deg);">-344,556</span>
<span class="t" style="font-size:8.7px;line-height:10.44px;color:#000;transform:translate(917.93px,442.77px) scaleX(0.9450) rotate(0.04deg);">-344,556</span>
<span class="t" style="font-size:8.7px;line-height:10.44px;color:#000;transform:translate(102.60px,455.23px) scaleX(0.9101) rotate(0.04deg);">EBITDA</span>
<span class="t" style="font-size:8.7px;line-height:10.44px;color:#000;transform:translate(246.71px,455.23px) scaleX(0.9450) rotate(0.04deg);">32,374,883</span>
<span class="t" style="font-size:8.7px;line-height:10.44px;color:#000;transform:translate(332.35px,455.23px) scaleX(0.9450) rotate(0.04deg);">6,239,224</span>
<span class="t" style="font-size:8.7px;line-height:10.44px;color:#000;transform:translate(415.71px,455.23px) scaleX(0.9450) rotate(0.04deg);">6,968,901</span>
<span class="t" style="font-size:8.7px;line-height:10.44px;color:#000;transform:translate(496.79px,455.23px) scaleX(0.9450) rotate(0.04deg);">10,323,312</span>
<span class="t" style="font-size:8.7px;line-height:10.44px;color:#000;transform:translate(580.45px,455.23px) scaleX(0.9450) rotate(0.04deg);">11,723,484</span>
<span class="t" style="font-size:8.7px;line-height:10.44px;color:#000;transform:translate(663.81px,455.23px) scaleX(0.9450) rotate(0.04deg);">11,706,742</span>
<span class="t" style="font-size:8.7px;line-height:10.44px;color:#000;transform:translate(747.17px,455.23px) scaleX(0.9450) rotate(0.04deg);">11,706,742</span>
<span class="t" style="font-size:8.7px;line-height:10.44px;color:#000;transform:translate(830.53px,455.23px) scaleX(0.9450) rotate(0.04deg);">11,706,742</span>
<span class="t" style="font-size:8.7px;line-height:10.44px;color:#000;transform:translate(913.89px,455.23px) scaleX(0.9450) rotate(0.04deg);">11,706,742</span>
<span class="t" style="font-size:8.7px;line-height:10.44px;color:#000;transform:translate(102.60px,467.69px) scaleX(0.9497) rotate(0.04deg);">Break Even level</span>
<span class="t" style="font-size:8.7px;line-height:10.44px;color:#000;transform:translate(248.99px,467.69px) scaleX(0.9450) rotate(0.04deg);">7,699,167</span>
<span class="t" style="font-size:8.7px;line-height:10.44px;color:#000;transform:translate(332.35px,467.69px) scaleX(0.9450) rotate(0.04deg);">2,096,345</span>
<span class="t" style="font-size:8.7px;line-height:10.44px;color:#000;transform:translate(415.71px,467.69px) scaleX(0.9450) rotate(0.04deg);">2,382,097</span>
<span class="t" style="font-size:8.7px;line-height:10.44px;color:#000;transform:translate(499.07px,467.69px) scaleX(0.9450) rotate(0.04deg);">3,353,563</span>
<span class="t" style="font-size:8.7px;line-height:10.44px;color:#000;transform:translate(583.04px,467.69px) scaleX(0.9450) rotate(0.04deg);">3,651,111</span>
<span class="t" style="font-size:8.7px;line-height:10.44px;color:#000;transform:translate(669.22px,467.69px) scaleX(0.9450) rotate(0.04deg);">781,640</span>
<span class="t" style="font-size:8.7px;line-height:10.44px;color:#000;transform:translate(749.15px,467.69px) scaleX(0.9450) rotate(0.04deg);">1,646,732</span>
<span class="t" style="font-size:8.7px;line-height:10.44px;color:#000;transform:translate(832.51px,467.69px) scaleX(0.9450) rotate(0.04deg);">1,250,439</span>
<span class="t" style="font-size:8.7px;line-height:10.44px;color:#000;transform:translate(919.30px,467.69px) scaleX(0.9450) rotate(0.04deg);">869,056</span>
<span class="t" style="font-size:8.7px;line-height:10.44px;color:#000;transform:translate(102.60px,480.15px) scaleX(1.0173) rotate(0.04deg);">Net Profit Before Tax</span>
<span class="t" style="font-size:8.7px;line-height:10.44px;color:#000;transform:translate(246.71px,480.15px) scaleX(0.9450) rotate(0.04deg);">32,374,883</span>
<span class="t" style="font-size:8.7px;line-height:10.44px;color:#000;transform:translate(332.35px,480.15px) scaleX(0.9450) rotate(0.04deg);">6,239,224</span>
<span class="t" style="font-size:8.7px;line-height:10.44px;color:#000;transform:translate(415.71px,480.15px) scaleX(0.9450) rotate(0.04deg);">6,968,901</span>
<span class="t" style="font-size:8.7px;line-height:10.44px;color:#000;transform:translate(496.79px,480.15px) scaleX(0.9450) rotate(0.04deg);">10,323,312</span>
<span class="t" style="font-size:8.7px;line-height:10.44px;color:#000;transform:translate(580.45px,480.15px) scaleX(0.9450) rotate(0.04deg);">11,723,484</span>
<span class="t" style="font-size:8.7px;line-height:10.44px;color:#000;transform:translate(663.81px,480.15px) scaleX(0.9450) rotate(0.04deg);">11,686,210</span>
<span class="t" style="font-size:8.7px;line-height:10.44px;color:#000;transform:translate(747.17px,480.15px) scaleX(0.9450) rotate(0.04deg);">11,679,121</span>
<span class="t" style="font-size:8.7px;line-height:10.44px;color:#000;transform:translate(830.53px,480.15px) scaleX(0.9450) rotate(0.04deg);">11,671,782</span>
<span class="t" style="font-size:8.7px;line-height:10.44px;color:#000;transform:translate(913.89px,480.15px) scaleX(0.9450) rotate(0.04deg);">11,664,182</span>
<span class="t" style="font-size:8.7px;line-height:10.44px;color:#000;transform:translate(102.60px,492.61px) scaleX(1.0308) rotate(0.04deg);">Net Profit After Tax</span>
<span class="t" style="font-size:8.7px;line-height:10.44px;color:#000;transform:translate(246.71px,492.61px) scaleX(0.9450) rotate(0.04deg);">25,899,906</span>
<span class="t" style="font-size:8.7px;line-height:10.44px;color:#000;transform:translate(332.35px,492.61px) scaleX(0.9450) rotate(0.04deg);">4,991,379</span>
<span class="t" style="font-size:8.7px;line-height:10.44px;color:#000;transform:translate(415.71px,492.61px) scaleX(0.9450) rotate(0.04deg);">5,575,121</span>
<span class="t" style="font-size:8.7px;line-height:10.44px;color:#000;transform:translate(499.07px,492.61px) scaleX(0.9450) rotate(0.04deg);">8,258,650</span>
<span class="t" style="font-size:8.7px;line-height:10.44px;color:#000;transform:translate(582.43px,492.61px) scaleX(0.9450) rotate(0.04deg);">9,378,787</span>
<span class="t" style="font-size:8.7px;line-height:10.44px;color:#000;transform:translate(663.81px,492.61px) scaleX(0.9450) rotate(0.04deg);">11,706,742</span>
<span class="t" style="font-size:8.7px;line-height:10.44px;color:#000;transform:translate(747.17px,492.61px) scaleX(0.9450) rotate(0.04deg);">11,699,653</span>
<span class="t" style="font-size:8.7px;line-height:10.44px;color:#000;transform:translate(830.53px,492.61px) scaleX(0.9450) rotate(0.04deg);">11,692,314</span>
<span class="t" style="font-size:8.7px;line-height:10.44px;color:#000;transform:translate(913.89px,492.61px) scaleX(0.9450) rotate(0.04deg);">11,684,714</span>
<div class="r" style="left:225.60px;top:377.76px;width:761.90px;height:1.00px;background:#7a7a7a;"></div>
<div class="r" style="left:225.60px;top:427.60px;width:761.90px;height:1.00px;background:#7a7a7a;"></div>
<div class="r" style="left:225.60px;top:452.52px;width:761.90px;height:1.00px;background:#7a7a7a;"></div>
<div class="r" style="left:225.60px;top:464.98px;width:761.90px;height:1.00px;background:#7a7a7a;"></div>
<div class="r" style="left:225.60px;top:502.36px;width:761.90px;height:1.00px;background:#a8a8a8;"></div>
<div class="r" style="left:986.90px;top:50.60px;width:13.10px;height:508.80px;background:#f0f0f0;"></div>
<div class="r" style="left:991.50px;top:61.80px;width:5.70px;height:474.60px;background:#6b6b6b;border-radius:2.8px;"></div>
<svg class="r" style="left:988px;top:52px" width="12" height="10" viewBox="0 0 12 10"><polygon points="3.4,7 9,7 6.2,2.6" fill="#5a5a5a"/></svg>
<svg class="r" style="left:988px;top:549px" width="12" height="10" viewBox="0 0 12 10"><polygon points="3,3 9.2,3 6.1,8" fill="#5a5a5a"/></svg>
<div class="r" style="left:0.00px;top:559.40px;width:1000.00px;height:20.60px;background:#e9ebef;"></div>
<div class="r" style="left:0.00px;top:580.00px;width:1000.00px;height:13.00px;background:#f3f3f3;"></div>
<svg class="r" style="left:9px;top:9px" width="14" height="13" viewBox="9 9 14 13"><rect x="14.4" y="10.2" width="6.9" height="10.3" rx="0.7" fill="#d6f2e2"/><path d="M16 12.6H21.3M16 15.3H21.3M16 18H21.3" stroke="#1d7f49" stroke-width="0.9" fill="none"/><path d="M18.6 10.2V20.5" stroke="#1d7f49" stroke-width="0.5" fill="none"/><rect x="10.3" y="11.2" width="6.6" height="8.3" rx="1.3" fill="#e6f8ee"/><path d="M12.2 13.2L15 17.5M15 13.2L12.2 17.5" stroke="#1d7f49" stroke-width="1.1"/></svg>
<svg class="r" style="left:30px;top:9px" width="13" height="13" viewBox="30 9 13 13" fill="none" stroke="#d2f3e0" stroke-width="1.15"><rect x="31.4" y="10.4" width="10" height="10" rx="0.8"/><path d="M33.2 10.6V13.8H39.6V10.6"/><path d="M33.4 20.2V16.6H39.4V20.2"/></svg>
<svg class="r" style="left:48px;top:8px" width="22" height="15" viewBox="0 0 22 15" fill="none" stroke="#cdf3de" stroke-width="1.1" stroke-linecap="round" stroke-linejoin="round"><path d="M2.4 2.6V6.6H6.4"/><path d="M2.6 6.4C4.2 3.6 7 2.4 9 3.4C11.4 4.6 11.4 7.6 9.6 9.4L6 12.6"/><path d="M16.4 6.2L17.6 7.2L18.8 6.2" stroke-width="0.9" stroke="#b5ebcd"/></svg>
<svg class="r" style="left:73.5px;top:8px" width="24" height="15" viewBox="0 0 24 15" fill="none" stroke="#46a072" stroke-width="1.1" stroke-linecap="round" stroke-linejoin="round"><path d="M10.6 2.6V6.6H6.6"/><path d="M10.4 6.4C8.8 3.6 6 2.4 4 3.4C1.6 4.6 1.6 7.6 3.4 9.4L7 12.6"/><path d="M15.8 6.2L17 7.2L18.2 6.2" stroke-width="0.9" stroke="#3c9868"/></svg>
<svg class="r" style="left:99px;top:10px" width="10" height="10" viewBox="0 0 10 10" fill="none" stroke="#9fddbb" stroke-width="0.8"><path d="M3 4.2H7.4"/><path d="M3.2 6L5.2 8L7.2 6Z" fill="#b6ebcf" stroke="none"/></svg>
<span class="t" style="font-size:7.4px;line-height:8.88px;color:#fff;transform:translate(116.50px,11.76px) scaleX(1.0330) rotate(0.04deg);">Packaging Manufacturer Financial Model 20 80.xlsx  -  Excel</span>
<svg class="r" style="left:394px;top:9.4px" width="12" height="12" viewBox="0 0 12 12" fill="none" stroke="#2f6f4d" stroke-width="1"><circle cx="7" cy="4.8" r="3"/><path d="M4.8 7L1.8 10"/></svg>
<span class="t" style="font-size:8.4px;line-height:10.08px;color:#2f6f4d;transform:translate(412.50px,9.96px) scaleX(0.9881) rotate(0.04deg);">Search</span>
<div class="r" style="left:883.8px;top:8.2px;width:15.2px;height:15.2px;border-radius:50%;background:#87302f;"></div>
<span class="t" style="font-size:5.2px;line-height:6.24px;color:#e9c9c9;transform:translate(887.69px,12.88px) scaleX(1.0000) rotate(0.04deg);">RS</span>
<svg class="r" style="left:915.4px;top:8.3px" width="80" height="14" viewBox="915 9 80 14" fill="none" stroke="#d9f6e6" stroke-width="0.95"><path d="M918.6 16H925.4"/><rect x="950" y="14.2" width="5" height="5" rx="0.8"/><path d="M951.6 14.2V13.4Q951.6 12.6 952.4 12.6H955.8Q956.6 12.6 956.6 13.4V16.8Q956.6 17.6 955.8 17.6H955"/><path d="M981 12.8L987.4 19.2M987.4 12.8L981 19.2"/></svg>
<span class="t" style="font-size:8.4px;line-height:10.08px;color:#3a3a3a;transform:translate(13.80px,36.56px) scaleX(0.9604) rotate(0.04deg);">File</span>
<span class="t" style="font-size:8.4px;line-height:10.08px;color:#3a3a3a;transform:translate(43.80px,36.56px) scaleX(1.0577) rotate(0.04deg);">Home</span>
<span class="t" style="font-size:8.4px;line-height:10.08px;color:#3a3a3a;transform:translate(80.50px,36.56px) scaleX(1.0472) rotate(0.04deg);">Insert</span>
<span class="t" style="font-size:8.4px;line-height:10.08px;color:#3a3a3a;transform:translate(114.50px,36.56px) scaleX(1.0713) rotate(0.04deg);">Draw</span>
<span class="t" style="font-size:8.4px;line-height:10.08px;color:#3a3a3a;transform:translate(148.00px,36.56px) scaleX(1.0239) rotate(0.04deg);">Page Layout</span>
<span class="t" style="font-size:8.4px;line-height:10.08px;color:#3a3a3a;transform:translate(209.00px,36.56px) scaleX(1.0283) rotate(0.04deg);">Formulas</span>
<span class="t" style="font-size:8.4px;line-height:10.08px;color:#3a3a3a;transform:translate(257.50px,36.56px) scaleX(1.0314) rotate(0.04deg);">Data</span>
<span class="t" style="font-size:8.4px;line-height:10.08px;color:#3a3a3a;transform:translate(288.80px,36.56px) scaleX(0.9803) rotate(0.04deg);">Review</span>
<span class="t" style="font-size:8.4px;line-height:10.08px;color:#3a3a3a;transform:translate(328.80px,36.56px) scaleX(1.0357) rotate(0.04deg);">View</span>
<span class="t" style="font-size:8.4px;line-height:10.08px;color:#3a3a3a;transform:translate(360.20px,36.56px) scaleX(1.0342) rotate(0.04deg);">Developer</span>
<span class="t" style="font-size:8.4px;line-height:10.08px;color:#3a3a3a;transform:translate(412.50px,36.56px) scaleX(1.0592) rotate(0.04deg);">Help</span>
<span class="t" style="font-size:8.4px;line-height:10.08px;color:#3a3a3a;transform:translate(443.80px,36.56px) scaleX(1.0605) rotate(0.04deg);">Acrobat</span>
<span class="t" style="font-size:8.4px;line-height:10.08px;color:#3a3a3a;transform:translate(487.50px,36.56px) scaleX(1.0263) rotate(0.04deg);">Power Pivot</span>
<div class="r" style="left:946.30px;top:33.30px;width:45.70px;height:15.30px;background:#188044;border-radius:2.2px;"></div>
<svg class="r" style="left:947px;top:35px" width="14" height="12" viewBox="947 35 14 12" fill="none" stroke="#dff7ea" stroke-width="0.95" stroke-linejoin="round" stroke-linecap="round"><path d="M950 41.2V44.8H957.6V41.2"/><path d="M953.8 43V37.8"/><path d="M951.5 39.9L953.8 37.6L956.1 39.9"/></svg>
<span class="t" style="font-size:9.2px;line-height:11.04px;color:#f4fff8;font-weight:bold;transform:translate(960.10px,36.48px) scaleX(0.8565) rotate(0.04deg);">Share</span>
<svg class="r" style="left:984px;top:38px" width="8" height="6" viewBox="0 0 8 6" fill="none" stroke="#e4f8ec" stroke-width="1.1"><path d="M1.6 2L3.9 4.2L6.2 2"/></svg>
<div class="r" style="left:0.00px;top:559.40px;width:1000.00px;height:20.60px;background:#e6e8ee;"></div>
<div class="r" style="left:17.20px;top:555.00px;width:970.30px;height:0.90px;background:#f6f6f6;"></div>
<div class="r" style="left:73.00px;top:561.60px;width:61.00px;height:14.90px;background:#fbfb8e;border-radius:2px;"></div>
<div class="r" style="left:140.00px;top:561.60px;width:42.00px;height:14.90px;background:#fbfb8e;border-radius:2px;"></div>
<div class="r" style="left:415.00px;top:561.60px;width:57.50px;height:14.90px;background:#fbfb8e;border-radius:2px;"></div>
<div class="r" style="left:756.00px;top:561.60px;width:49.00px;height:14.90px;background:#fbfb8e;border-radius:2px;"></div>
<div class="r" style="left:810.00px;top:561.60px;width:70.40px;height:14.90px;background:#fbfb8e;border-radius:2px;"></div>
<div class="r" style="left:723.50px;top:559.40px;width:28.50px;height:17.80px;background:#fff;border-radius:0 0 2px 2px;"></div>
<div class="r" style="left:729.20px;top:574.90px;width:17.00px;height:1.20px;background:#217346;"></div>
<span class="t" style="font-size:8.6px;line-height:10.32px;color:#3c3c3c;transform:translate(79.40px,564.64px) scaleX(0.9590) rotate(0.04deg);">CAPEX 2043</span>
<span class="t" style="font-size:8.6px;line-height:10.32px;color:#3c3c3c;transform:translate(146.00px,564.64px) scaleX(0.9984) rotate(0.04deg);">IS 2044</span>
<span class="t" style="font-size:8.6px;line-height:10.32px;color:#3c3c3c;transform:translate(192.60px,564.64px) scaleX(0.9822) rotate(0.04deg);">CF 2044</span>
<span class="t" style="font-size:8.6px;line-height:10.32px;color:#3c3c3c;transform:translate(242.40px,564.64px) scaleX(0.9729) rotate(0.04deg);">BS 2044</span>
<span class="t" style="font-size:8.6px;line-height:10.32px;color:#3c3c3c;transform:translate(294.00px,564.64px) scaleX(1.0364) rotate(0.04deg);">Statements Summary 2044</span>
<span class="t" style="font-size:8.6px;line-height:10.32px;color:#3c3c3c;transform:translate(420.00px,564.64px) scaleX(0.9590) rotate(0.04deg);">CAPEX 2044</span>
<span class="t" style="font-size:8.6px;line-height:10.32px;color:#3c3c3c;transform:translate(487.40px,564.64px) scaleX(1.0009) rotate(0.04deg);">Sales Summary Charts</span>
<span class="t" style="font-size:8.6px;line-height:10.32px;color:#3c3c3c;transform:translate(595.40px,564.64px) scaleX(1.0201) rotate(0.04deg);">Key Metrics Charts</span>
<span class="t" style="font-size:8.6px;line-height:10.32px;color:#3c3c3c;transform:translate(687.50px,564.64px) scaleX(0.9830) rotate(0.04deg);">Charts</span>
<span class="t" style="font-size:8.6px;line-height:10.32px;color:#3c3c3c;transform:translate(763.00px,564.64px) scaleX(0.9399) rotate(0.04deg);">Expenses</span>
<span class="t" style="font-size:8.6px;line-height:10.32px;color:#1c1c1c;font-weight:bold;transform:translate(729.50px,563.04px) scaleX(0.9087) rotate(0.04deg);">BEA</span>
<div class="r" style="left:816.7px;top:562px;width:63.7px;height:15px;overflow:hidden;"><span class="t" style="font-size:8.6px;line-height:10.3px;color:#3c3c3c;transform:translate(0px,2.65px) scaleX(1.0047) rotate(0.04deg);">COGS Assumptions</span></div>
<svg class="r" style="left:10px;top:562px" width="60" height="15" viewBox="10 562 60 15" fill="none" stroke="#9a9a9a" stroke-width="1"><path d="M20 566.2L17.4 569.2L20 572.2"/><path d="M39 566.2L41.6 569.2L39 572.2"/><g fill="#444" stroke="none"><circle cx="56.8" cy="569.4" r="0.8"/><circle cx="59.6" cy="569.4" r="0.8"/><circle cx="62.4" cy="569.4" r="0.8"/></g></svg>
<svg class="r" style="left:884px;top:562px" width="110" height="15" viewBox="884 562 110 15" fill="none" stroke="#444" stroke-width="1"><g fill="#444" stroke="none"><circle cx="886.9" cy="569.4" r="0.8"/><circle cx="889.6" cy="569.4" r="0.8"/><circle cx="892.3" cy="569.4" r="0.8"/><circle cx="932" cy="566.4" r="0.7"/><circle cx="932" cy="569.2" r="0.7"/><circle cx="932" cy="572" r="0.7"/><polygon points="949,566.6 949,571.8 945.4,569.2" fill="#5a5a5a"/><polygon points="981,566.6 981,571.8 984.6,569.2" fill="#5a5a5a"/><rect x="953.6" y="566.6" width="12.2" height="5.2" rx="2.6" fill="#6b6b6b"/></g><path d="M907.2 569.2H914.6M910.9 565.5V572.9" stroke-width="0.9"/></svg>
<div class="r" style="left:0.00px;top:580.00px;width:1000.00px;height:13.00px;background:#f3f3f3;"></div>
<span class="t" style="font-size:6.6px;line-height:7.92px;color:#444;transform:translate(7.40px,584.24px) scaleX(0.9749) rotate(0.04deg);">Ready</span>
<svg class="r" style="left:38px;top:581.8px" width="34" height="12" viewBox="38 581 34 12" fill="none" stroke="#555" stroke-width="0.8"><rect x="39.6" y="583.2" width="8.6" height="7.6" rx="0.6"/><path d="M39.6 585.6H48.2M42.4 583.2V585.6"/><circle cx="45.4" cy="588.4" r="1.5"/><circle cx="63.2" cy="583.9" r="1"/><path d="M60.2 585.8H66.4M63.3 585.8V588.2M63.3 588.2L61.4 591.2M63.3 588.2L65.2 591.2"/><path d="M66.2 589.2L68.8 591.4M68.8 589.2L66.2 591.4" stroke-width="0.7"/></svg>
<span class="t" style="font-size:6.6px;line-height:7.92px;color:#333;font-weight:bold;transform:translate(71.60px,584.24px) scaleX(0.9992) rotate(0.04deg);">Accessibility: Investigate</span>
<div class="r" style="left:812.80px;top:581.00px;width:14.20px;height:12.00px;background:#dadada;"></div>
<svg class="r" style="left:812px;top:581px" width="190" height="12" viewBox="812 581 190 12" fill="none" stroke="#555" stroke-width="0.8"><rect x="815.4" y="583.4" width="8" height="7.2"/><path d="M815.4 585.8H823.4M815.4 588.2H823.4M818.1 583.4V590.6M820.8 583.4V590.6"/><rect x="842" y="583.4" width="8" height="7.2"/><path d="M844 583.4V590.6M848 583.4V590.6M844 585.4H848"/><rect x="868" y="583.4" width="8" height="7.2"/><path d="M868 588H872V583.4M872 586H876"/><path d="M888.6 587.2H892.8" stroke="#666"/><path d="M896 587.2H963.6" stroke="#8a8a8a" stroke-width="0.7"/><path d="M965.2 587.2H969.8M967.5 584.9V589.5" stroke="#666"/><rect x="928.8" y="583.4" width="2.2" height="7.6" fill="#444" stroke="none"/></svg>
<span class="t" style="font-size:6.6px;line-height:7.92px;color:#444;transform:translate(978.70px,584.04px) scaleX(0.9538) rotate(0.04deg);">100%</span>

</body></html>
